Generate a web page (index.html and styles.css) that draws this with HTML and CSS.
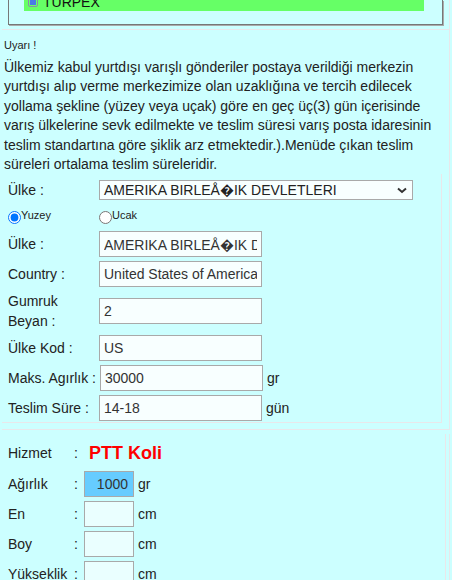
FILE: index.html
```html
<!DOCTYPE html>
<html lang="tr">
<head>
  <meta charset="UTF-8">
  <title>Yurtdışı Gönderi Ücreti</title>
  <link rel="stylesheet" href="styles.css">
</head>
<body>
  <div class="panel top-panel">
    <div class="listbox">
      <div class="list-row">
        <div class="list-item">
          <span class="item-icon"></span>
          <span class="item-text">TURPEX</span>
        </div>
      </div>
    </div>
  </div>

  <div class="panel info-panel">
    <div class="notice">
      <div class="notice-title">Uyarı !</div>
      <p class="notice-text">Ülkemiz kabul yurtdışı varışlı gönderiler postaya verildiği merkezin yurtdışı alıp verme merkezimize olan uzaklığına ve tercih edilecek yollama şekline (yüzey veya uçak) göre en geç üç(3) gün içerisinde varış ülkelerine sevk edilmekte ve teslim süresi varış posta idaresinin teslim standartına göre şiklik arz etmektedir.).Menüde çıkan teslim süreleri ortalama teslim süreleridir.</p>
    </div>

    <div class="inner form-box">
      <div class="form-row">
        <span class="label">Ülke :</span>
        <div class="select-box" role="combobox">
          <span class="select-text">AMERIKA BIRLEÅ�IK DEVLETLERI</span>
          <svg class="chevron" width="10" height="7" viewBox="0 0 10 7">
            <path d="M1 1.5 L5 5 L9 1.5" fill="none" stroke="#333" stroke-width="2"/>
          </svg>
        </div>
      </div>

      <div class="form-row radio-row">
        <label class="radio-cell first">
          <input type="radio" name="tip" checked>
          <span>Yuzey</span>
        </label>
        <label class="radio-cell">
          <input type="radio" name="tip">
          <span>Ucak</span>
        </label>
      </div>

      <div class="form-row">
        <span class="label">Ülke :</span>
        <input class="field" type="text" value="AMERIKA BIRLEÅ�IK DEVLETLERI">
      </div>

      <div class="form-row">
        <span class="label">Country :</span>
        <input class="field" type="text" value="United States of America">
      </div>

      <div class="form-row">
        <span class="label">Gumruk<br>Beyan :</span>
        <input class="field" type="text" value="2">
      </div>

      <div class="form-row">
        <span class="label">Ülke Kod :</span>
        <input class="field" type="text" value="US">
      </div>

      <div class="form-row">
        <span class="label">Maks. Agırlık :</span>
        <input class="field" type="text" value="30000">
        <span class="unit">gr</span>
      </div>

      <div class="form-row">
        <span class="label">Teslim Süre :</span>
        <input class="field" type="text" value="14-18">
        <span class="unit">gün</span>
      </div>
    </div>
  </div>

  <div class="panel calc-panel">
    <div class="inner calc-box">
      <div class="calc-grid">
        <span class="calc-label">Hizmet</span>
        <span class="colon">:</span>
        <span class="service">PTT Koli</span>

        <span class="calc-label">Ağırlık</span>
        <span class="colon">:</span>
        <input class="small-field weight" type="text" value="1000">
        <span class="unit">gr</span>

        <span class="calc-label">En</span>
        <span class="colon">:</span>
        <input class="small-field" type="text">
        <span class="unit">cm</span>

        <span class="calc-label">Boy</span>
        <span class="colon">:</span>
        <input class="small-field" type="text">
        <span class="unit">cm</span>

        <span class="calc-label">Yükseklik</span>
        <span class="colon">:</span>
        <input class="small-field" type="text">
        <span class="unit">cm</span>
      </div>
    </div>
  </div>
</body>
</html>
```

FILE: styles.css
```css
html, body {
  overflow: hidden;
}

body {
  margin: 0;
  background: #ccffff;
  font-family: "Liberation Sans", Arial, sans-serif;
  font-size: 14px;
  color: #222;
}

.panel {
  margin: 0 2px;
  border-right: 1px solid #e9e7ea;
  border-bottom: 1px solid #e9e7ea;
}

.inner {
  border-right: 1px solid #e9e7ea;
  border-bottom: 1px solid #e9e7ea;
}

/* top list */
.top-panel {
  padding: 0 0 4px 6px;
}

.listbox {
  width: 435px;
  height: 25px;
  box-sizing: border-box;
  border: 1px solid #777;
  border-top: none;
  box-shadow: 1px 1px 0 #aaa;
}

.list-row {
  margin-left: 15px;
  width: 400px;
  height: 11px;
  overflow: hidden;
  background: #66ff66;
}

.list-item {
  display: flex;
  align-items: center;
  height: 18px;
  margin-top: -7px;
  padding-left: 4px;
  line-height: 18px;
  color: #111;
}

.item-icon {
  width: 6px;
  height: 6px;
  padding: 1px;
  border: 1px solid #8890a8;
  border-radius: 2px;
  background: #4a7ae6;
  background-clip: content-box;
}

.item-text {
  margin-left: 5px;
}

/* notice */
.notice {
  padding: 9px 0 0 2px;
}

.notice-title {
  font-size: 11px;
  line-height: 13px;
}

.notice-text {
  margin: 6px 0 0;
  line-height: 19.4px;
}

/* country form */
.info-panel {
  padding-bottom: 6px;
}

.form-box {
  margin-right: 7px;
  padding: 6px 0 1px 6px;
  display: flex;
  flex-direction: column;
  gap: 4px;
}

.form-row {
  display: flex;
  align-items: center;
  gap: 4px;
}

.label {
  flex: 0 0 87px;
  white-space: nowrap;
  line-height: 20px;
}

.field {
  box-sizing: border-box;
  flex: 0 0 auto;
  width: 163px;
  height: 26px;
  margin: 0;
  padding: 0 4px;
  border: 1px solid #a9a9a9;
  background: #f8ffff;
  font-family: inherit;
  font-size: 14px;
  color: #333;
}

.select-box {
  box-sizing: border-box;
  flex: 0 0 314px;
  display: flex;
  align-items: center;
  justify-content: space-between;
  height: 20px;
  padding: 0 5px 0 4px;
  border: 1px solid #a9a9a9;
  background: #f8ffff;
  line-height: 18px;
  color: #222;
  white-space: nowrap;
}

.chevron {
  flex: 0 0 auto;
}

.radio-row {
  align-items: flex-start;
  height: 23px;
}

.radio-cell {
  display: flex;
  align-items: flex-start;
  font-size: 11px;
  line-height: 13px;
}

.radio-cell.first {
  flex: 0 0 87px;
}

.radio-cell input {
  width: 13px;
  height: 13px;
  margin: 7px 0 0;
}

.radio-cell span {
  margin-top: 5px;
}

.unit {
  white-space: nowrap;
}

/* calculation */
.calc-panel {
  margin-top: 4px;
}

.calc-box {
  margin-right: 3px;
  padding: 5px 0 0 6px;
}

.calc-grid {
  display: grid;
  grid-template-columns: 62px 6px 50px auto;
  grid-template-rows: 28px;
  grid-auto-rows: 26px;
  column-gap: 4px;
  row-gap: 4px;
  align-items: center;
}

.calc-label {
  white-space: nowrap;
}

.service {
  grid-column: 3 / span 2;
  margin-left: 5px;
  font-size: 18px;
  font-weight: bold;
  color: #ff0000;
}

.small-field {
  box-sizing: border-box;
  width: 50px;
  height: 26px;
  margin: 0;
  padding: 0 5px;
  border: 1px solid #a9a9a9;
  background: #eaffff;
  font-family: inherit;
  font-size: 14px;
  color: #333;
}

.weight {
  background: #66ccff;
  text-align: right;
}
```
